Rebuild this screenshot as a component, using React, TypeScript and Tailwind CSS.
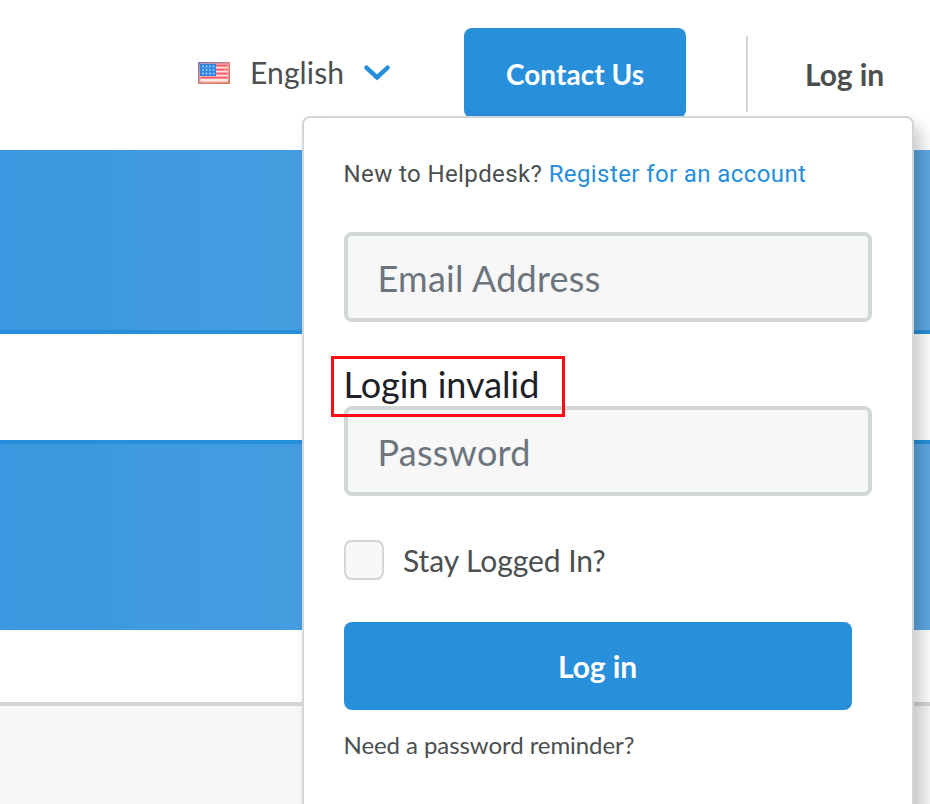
import React from "react";

function Flag() {
  return (
    <svg width="32" height="22" viewBox="0 0 32 22" className="block shrink-0" aria-hidden="true">
      <defs>
        <linearGradient id="edge" x1="0" x2="1" y1="0" y2="1">
          <stop offset="0" stopColor="#5a78bd" />
          <stop offset="0.3" stopColor="#a58298" />
          <stop offset="0.6" stopColor="#e08272" />
          <stop offset="1" stopColor="#cc7a62" />
        </linearGradient>
      </defs>
      <rect width="32" height="22" fill="url(#edge)" />
      <rect x="1.5" y="1.5" width="29" height="19" fill="#f3a9a7" />
      <rect x="2.5" y="2.5" width="27" height="17" fill="#fbe6e6" />
      {[2.5, 6.5, 10.5, 14.5].map((y) => (
        <rect key={y} x="2.5" y={y} width="27" height="2.2" fill="#fa5f6e" />
      ))}
      <rect x="2" y="2" width="16" height="12" fill="#2f86e4" />
      {[4.5, 8, 11.5].map((y) =>
        [5, 8.5, 12, 15.5].map((x) => <circle key={`${x}-${y}`} cx={x} cy={y} r="0.95" fill="#a9d3fa" />)
      )}
      <circle cx="27" cy="7" r="1" fill="#f9b04c" />
    </svg>
  );
}

function Header() {
  return (
    <header className="flex h-[150px] items-start bg-white pl-[198px] text-[#4b4f4f]">
      <button className="mt-[51px] flex h-11 items-center">
        <Flag />
        <span className="-mt-[2px] ml-[20px] w-[94px] whitespace-nowrap text-left text-[30px] leading-[44px] tracking-[0.12px]">English</span>
        <svg width="28" height="18" viewBox="0 0 28 18" className="-mt-[2px] ml-[19px]" fill="none" stroke="#268fdb" strokeWidth="4.4" aria-hidden="true">
          <path d="M3.4 4.6 L14 14.4 L24.6 4.6" strokeLinecap="round" />
        </svg>
      </button>
      <button className="ml-[73px] mt-7 h-[90px] w-[222px] rounded-lg bg-[#288fdb] pt-px text-[28px] font-bold tracking-[0.05px] text-white">
        Contact Us
      </button>
      <div className="ml-[60px] mt-9 h-[76px] w-0.5 bg-[#d1d6d6]" />
      <a className="ml-[57px] mt-[52px] whitespace-nowrap text-[30px] font-bold leading-[44px] tracking-[-0.1px]">Log in</a>
    </header>
  );
}

function LoginPanel() {
  const field =
    "block h-[90px] w-[528px] rounded-lg border-4 border-[#d1d6d6] bg-[#f7f7f7] pl-[29.5px] pr-[30px] pt-[2px] text-[36px] tracking-[0.25px] text-[#1d2127] outline-none placeholder:text-[#6c757d] placeholder:opacity-100";
  return (
    <form className="absolute left-[302px] top-[116px] h-[720px] w-[612px] rounded-lg border-2 border-[#d1d6d6] bg-white px-10 pt-10 text-[#4b4f4f] shadow-[8px_10px_16px_rgba(0,0,0,0.2)]">
      <p className="-ml-[0.5px] h-[74px] whitespace-nowrap font-['Roboto',sans-serif] text-[24px] leading-8 tracking-[0.4px]">
        New to Helpdesk? <a className="text-[#268fdb]">Register for an account</a>
      </p>
      <input className={field} placeholder="Email Address" />
      <div className="-ml-[0.5px] flex h-[84px] items-end pb-px text-[36px] leading-[42px] text-[#1d2127]">Login invalid</div>
      <input className={field} placeholder="Password" type="password" />
      <label className="mt-[44px] flex h-10 items-center">
        <span className="size-10 rounded-lg border-2 border-[#d1d6d6] bg-[#f7f7f7]" />
        <span className="ml-[19px] text-[30px] tracking-[-0.05px]">Stay Logged In?</span>
      </label>
      <button className="mt-[42px] h-[88px] w-[508px] rounded-lg bg-[#288fdb] pr-px text-[30px] font-bold tracking-[-0.1px] text-white">Log in</button>
      <a className="-ml-[0.5px] mt-[17px] block text-[24px] leading-9 tracking-[-0.07px]">Need a password reminder?</a>
    </form>
  );
}

export default function App() {
  return (
    <div className="relative h-[804px] w-[930px] overflow-hidden bg-white font-['Lato',sans-serif]">
      <Header />
      <main>
        <section className="h-[184px] border-b-4 border-[#268fdb] bg-linear-to-r from-[#3998df] to-[#5da7e2]" />
        <div className="h-[106px]" />
        <section className="h-[190px] border-t-4 border-[#268fdb] bg-linear-to-r from-[#3998df] to-[#5da7e2]" />
        <div className="h-[72px]" />
        <section className="h-[102px] border-t-4 border-[#d1d6d6] bg-[#f7f7f7]" />
      </main>
      <LoginPanel />
      <div className="pointer-events-none absolute left-[331px] top-[356px] h-[61px] w-[234px] border-3 border-[#ff0a12]" />
    </div>
  );
}
